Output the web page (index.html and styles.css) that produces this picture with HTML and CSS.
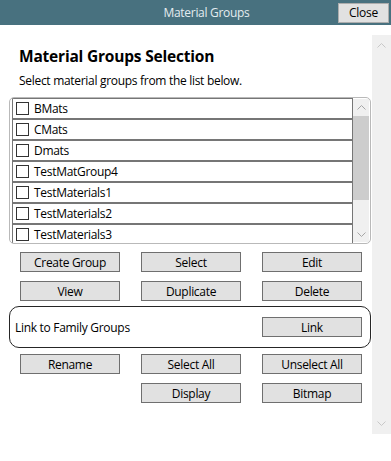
FILE: index.html
```html
<!DOCTYPE html>
<html lang="en">

<head>
   <meta charset="UTF-8" />
   <meta name="viewport" content="width=device-width, initial-scale=1.0" />
   <title>Material Groups</title>
   <link rel="stylesheet" href="styles.css">
</head>

<body>
   <div class="titlebar">
      <span class="title">Material Groups</span>
      <button class="close-btn">Close</button>
   </div>

   <div class="main">
      <div class="content">
         <h1>Material Groups Selection</h1>
         <p class="subtitle">Select material groups from the list below.</p>

         <div class="listbox">
            <div class="items">
               <label class="item"><span class="check"></span>BMats</label>
               <label class="item"><span class="check"></span>CMats</label>
               <label class="item"><span class="check"></span>Dmats</label>
               <label class="item"><span class="check"></span>TestMatGroup4</label>
               <label class="item"><span class="check"></span>TestMaterials1</label>
               <label class="item"><span class="check"></span>TestMaterials2</label>
               <label class="item"><span class="check"></span>TestMaterials3</label>
            </div>
            <div class="scrollbar inner">
               <svg class="arrow" width="9" height="5" viewBox="0 0 9 5"><path d="M0.5 4.5 L4.5 0.5 L8.5 4.5" fill="none" stroke="#a6a6a6" /></svg>
               <div class="track"><div class="thumb"></div></div>
               <svg class="arrow" width="9" height="5" viewBox="0 0 9 5"><path d="M0.5 0.5 L4.5 4.5 L8.5 0.5" fill="none" stroke="#a6a6a6" /></svg>
            </div>
         </div>

         <div class="btn-grid">
            <button class="btn">Create Group</button>
            <button class="btn">Select</button>
            <button class="btn">Edit</button>
            <button class="btn">View</button>
            <button class="btn">Duplicate</button>
            <button class="btn">Delete</button>
         </div>

         <div class="link-box">
            <span>Link to Family Groups</span>
            <button class="btn">Link</button>
         </div>

         <div class="btn-grid">
            <button class="btn">Rename</button>
            <button class="btn">Select All</button>
            <button class="btn">Unselect All</button>
            <span></span>
            <button class="btn">Display</button>
            <button class="btn">Bitmap</button>
         </div>
      </div>

      <div class="scrollbar outer">
         <svg class="arrow" width="9" height="5" viewBox="0 0 9 5"><path d="M0.5 4.5 L4.5 0.5 L8.5 4.5" fill="none" stroke="#c8c8c8" /></svg>
         <svg class="arrow" width="9" height="5" viewBox="0 0 9 5"><path d="M0.5 0.5 L4.5 4.5 L8.5 0.5" fill="none" stroke="#c8c8c8" /></svg>
      </div>
   </div>
</body>

</html>
```

FILE: styles.css
```css
* {
   margin: 0;
   padding: 0;
   box-sizing: border-box;
}

body {
   font-family: "Open Sans", "Noto Sans", sans-serif;
   font-size: 12px;
   letter-spacing: -0.3px;
   color: #000;
   background: #fff;
   width: 391px;
   height: 461px;
   overflow: hidden;
}

button {
   font-family: inherit;
   font-size: 12px;
   letter-spacing: inherit;
   color: #000;
}

/* title bar */
.titlebar {
   height: 25px;
   background: #48717f;
   display: flex;
   align-items: center;
}

.title {
   flex: 1;
   padding-left: 75px;
   text-align: center;
   color: #e4ecef;
   font-size: 12px;
}

.close-btn {
   width: 51px;
   height: 20px;
   margin-right: 2px;
   background: #e1e1e1;
   border: 1px solid #adadad;
}

/* main area */
.main {
   display: flex;
}

.content {
   width: 372px;
   padding-left: 9px;
   padding-right: 1px;
}

h1 {
   font-size: 15.5px;
   font-weight: 700;
   letter-spacing: -0.2px;
   margin: 20px 0 0 10px;
   line-height: 22px;
}

.subtitle {
   margin: 5px 0 0 10px;
   line-height: 18px;
}

/* list box */
.listbox {
   margin-top: 7px;
   height: 147px;
   border: 1px solid #b9b9b9;
   border-radius: 5px;
   padding: 0 1px 0 2px;
   display: flex;
   overflow: hidden;
}

.items {
   flex: 1;
   overflow: hidden;
}

.item {
   height: 21px;
   border: 1px solid #767676;
   display: flex;
   align-items: center;
   gap: 5px;
   padding-left: 3px;
}

.check {
   width: 13px;
   height: 13px;
   border: 1px solid #333;
   background: #fff;
}

.scrollbar {
   background: #f0f0f0;
   display: flex;
   flex-direction: column;
   align-items: center;
}

.scrollbar.inner {
   width: 16px;
   margin: 1px 0 1px 0;
   padding: 6px 0 5px;
}

.track {
   flex: 1;
   width: 100%;
   padding-top: 6px;
}

.thumb {
   height: 84px;
   background: #cdcdcd;
}

.scrollbar.outer {
   width: 19px;
   height: 399px;
   margin-top: 10px;
   justify-content: space-between;
   padding: 8px 0 8px;
}

/* buttons */
.btn-grid {
   display: grid;
   grid-template-columns: repeat(3, 100px);
   column-gap: 21px;
   row-gap: 9px;
   padding-left: 11px;
   margin-top: 8px;
}

.btn {
   height: 20px;
   background: #e1e1e1;
   border: 1px solid #6f6f6f;
}

.link-box {
   margin-top: 5px;
   margin-bottom: 6px;
   height: 42px;
   border: 1px solid #262626;
   border-radius: 10px;
   display: flex;
   align-items: center;
   justify-content: space-between;
   padding: 0 8px 0 5px;
}

.link-box .btn {
   width: 100px;
}

.link-box + .btn-grid {
   margin-top: 0;
}
```
